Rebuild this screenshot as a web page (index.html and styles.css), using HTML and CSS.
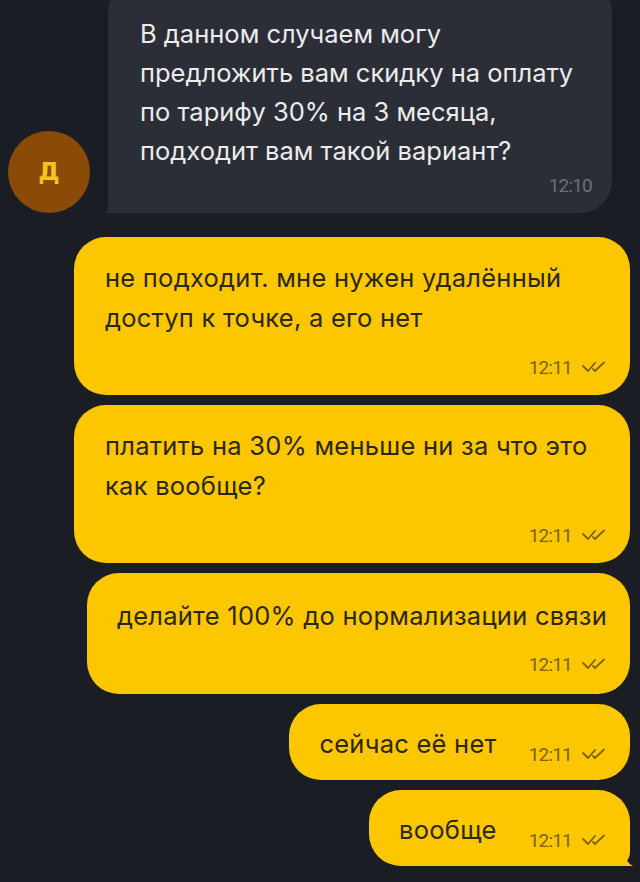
FILE: index.html
```html
<!DOCTYPE html>
<html lang="ru">
<head>
<meta charset="utf-8">
<link rel="stylesheet" href="styles.css">
</head>
<body>
<div class="chat">
  <div class="row row-in">
    <div class="avatar">Д</div>
    <div class="bubble bubble-in">
      <div class="text">В данном случаем могу<br>предложить вам скидку на оплату<br>по тарифу 30% на 3 месяца,<br>подходит вам такой вариант?</div>
      <div class="meta"><span class="time">12:10</span></div>
      <svg class="tail-in" width="20" height="20" viewBox="0 0 20 20"><path d="M16 0 V14 Q16 20 20 20 H0 Q4 20 4 12 V0 Z" fill="#2b2e37"/></svg>
    </div>
  </div>

  <div class="bubble bubble-out wide">
    <div class="text">не подходит. мне нужен удалённый<br>доступ к точке, а его нет</div>
    <div class="meta"><span class="time">12:11</span><svg class="check" width="25" height="12" viewBox="0 0 25 12"><path d="M1 5 L6 10 L13 2 M11 8 L13 10 L22 1.5" fill="none" stroke="#7a6200" stroke-width="1.8" stroke-linecap="round" stroke-linejoin="round"/></svg></div>
  </div>

  <div class="bubble bubble-out wide">
    <div class="text">платить на 30% меньше ни за что это<br>как вообще?</div>
    <div class="meta"><span class="time">12:11</span><svg class="check" width="25" height="12" viewBox="0 0 25 12"><path d="M1 5 L6 10 L13 2 M11 8 L13 10 L22 1.5" fill="none" stroke="#7a6200" stroke-width="1.8" stroke-linecap="round" stroke-linejoin="round"/></svg></div>
  </div>

  <div class="bubble bubble-out mid">
    <div class="text">делайте 100% до нормализации связи</div>
    <div class="meta"><span class="time">12:11</span><svg class="check" width="25" height="12" viewBox="0 0 25 12"><path d="M1 5 L6 10 L13 2 M11 8 L13 10 L22 1.5" fill="none" stroke="#7a6200" stroke-width="1.8" stroke-linecap="round" stroke-linejoin="round"/></svg></div>
  </div>

  <div class="bubble bubble-out short">
    <div class="text">сейчас её нет</div>
    <div class="meta"><span class="time">12:11</span><svg class="check" width="25" height="12" viewBox="0 0 25 12"><path d="M1 5 L6 10 L13 2 M11 8 L13 10 L22 1.5" fill="none" stroke="#7a6200" stroke-width="1.8" stroke-linecap="round" stroke-linejoin="round"/></svg></div>
  </div>

  <div class="bubble bubble-out short last">
    <div class="text">вообще</div>
    <div class="meta"><span class="time">12:11</span><svg class="check" width="25" height="12" viewBox="0 0 25 12"><path d="M1 5 L6 10 L13 2 M11 8 L13 10 L22 1.5" fill="none" stroke="#7a6200" stroke-width="1.8" stroke-linecap="round" stroke-linejoin="round"/></svg></div>
    <svg class="tail-out" width="22" height="22" viewBox="0 0 22 22"><path d="M0 0 H12 V8 Q12 18 20 22 H0 Z" fill="#fdc700"/></svg>
  </div>
</div>
</body>
</html>
```

FILE: styles.css
```css
* { box-sizing: border-box; }
html, body {
  margin: 0;
  padding: 0;
  background: #1b1d24;
}
body {
  width: 640px;
  height: 882px;
  overflow: hidden;
  font-family: "Inter", "Noto Sans", sans-serif;
}
.chat {
  display: flex;
  flex-direction: column;
  align-items: flex-end;
  gap: 10px;
  margin-top: -20px;
  padding-right: 10px;
}
.row-in {
  align-self: stretch;
  display: flex;
  align-items: flex-end;
  gap: 18px;
  padding-left: 8px;
  padding-right: 18px;
  margin-bottom: 14px;
}
.avatar {
  flex: none;
  width: 82px;
  height: 82px;
  border-radius: 50%;
  background: #8a4b08;
  color: #f7c21c;
  font-family: "DejaVu Sans", sans-serif;
  font-weight: bold;
  font-size: 24px;
  display: flex;
  align-items: center;
  justify-content: center;
}
.bubble {
  position: relative;
  border-radius: 32px;
}
.bubble-in {
  flex: 1;
  background: #2b2e37;
  color: #ececec;
  padding: 34px 20px 18px 32px;
  border-bottom-left-radius: 12px;
}
.text {
  font-size: 25.5px;
  line-height: 39px;
  white-space: nowrap;
}
.meta {
  display: flex;
  justify-content: flex-end;
  align-items: center;
  gap: 10px;
  height: 20px;
}
.time {
  font-family: "Roboto", sans-serif;
  font-size: 19px;
  letter-spacing: -0.8px;
}
.bubble-in .time { color: #6a6f7d; }
.bubble-in .meta { margin-top: 5px; }
.tail-in {
  position: absolute;
  left: -4px;
  bottom: 0;
}
.bubble-out {
  background: #fdc700;
  color: #2b2711;
  padding: 21px 23px 18px 31px;
}
.bubble-out .time { color: #7a6300; }
.bubble-out .text { line-height: 40px; letter-spacing: 0.25px; }
.wide { width: 556px; }
.wide .meta { margin-top: 19px; }
.mid { padding: 23px 23px 20px 30px; }
.mid .meta { margin-top: 18px; }
.short {
  display: flex;
  align-items: flex-end;
  gap: 32px;
  padding: 20px 23px 16px 30px;
}
.last { border-bottom-right-radius: 14px; }
.tail-out {
  position: absolute;
  right: -5px;
  bottom: 0;
}
.check { display: block; }
```
